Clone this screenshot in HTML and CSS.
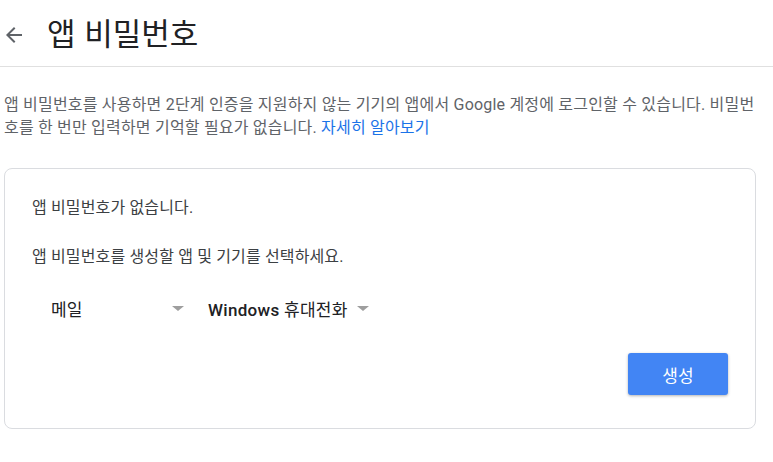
FILE: index.html
```html
<!DOCTYPE html>
<html lang="ko">
<head>
<meta charset="utf-8">
<link rel="stylesheet" href="styles.css">
</head>
<body>
<header class="header">
  <svg class="back" width="24" height="24" viewBox="0 0 24 24"><path d="M20 11H7.83l5.59-5.59L12 4l-8 8 8 8 1.41-1.41L7.83 13H20v-2z" fill="#5f6368"/></svg>
  <h1 class="title">앱 비밀번호</h1>
</header>
<p class="intro">앱 비밀번호를 사용하면 2단계 인증을 지원하지 않는 기기의 앱에서 Google 계정에 로그인할 수 있습니다. 비밀번호를 한 번만 입력하면 기억할 필요가 없습니다. <a class="link" href="#">자세히 알아보기</a></p>
<section class="card">
  <p class="msg first">앱 비밀번호가 없습니다.</p>
  <p class="msg">앱 비밀번호를 생성할 앱 및 기기를 선택하세요.</p>
  <div class="selects">
    <div class="select s1"><span>메일</span><span class="caret"></span></div>
    <div class="select s2"><span><span class="en">Windows</span> 휴대전화</span><span class="caret"></span></div>
  </div>
  <div class="actions"><button class="btn">생성</button></div>
</section>
</body>
</html>
```
FILE: styles.css
```css
* { box-sizing: border-box; }
body {
  margin: 0;
  font-family: Roboto, "Noto Sans CJK KR", sans-serif;
  background: #fff;
  color: #202124;
}
.header {
  display: flex;
  align-items: center;
  height: 67px;
  border-bottom: 1px solid #e0e0e0;
  padding-left: 2px;
}
.back { display: block; margin-right: 21px; margin-top: 3px; }
.title {
  margin: 0;
  font-size: 31px;
  font-weight: 400;
  color: #202124;
  font-family: "Noto Sans CJK KR", sans-serif;
  line-height: 1;
  margin-top: -3px;
}
.intro {
  margin: 26px 4px 0 4px;
  font-size: 16px;
  line-height: 23px;
  letter-spacing: 0.2px;
  color: #5f6368;
}
.link { color: #1a73e8; text-decoration: none; }
.card {
  margin: 29px 18px 0 4px;
  width: 752px;
  height: 261px;
  border: 1px solid #dadce0;
  border-radius: 8px;
  padding: 27px 27px 0 27px;
}
.msg {
  margin: 0;
  font-size: 16px;
  line-height: 24px;
  letter-spacing: 0.15px;
  color: #3c4043;
}
.msg.first { margin-bottom: 25px; }
.selects {
  display: flex;
  gap: 24px;
  margin-top: 19px;
}
.select {
  display: flex;
  align-items: center;
  height: 40px;
  font-size: 17px;
  font-weight: 400;
  color: #202124;
}
.s1 { width: 152px; padding-left: 19px; justify-content: space-between; }
.s2 { gap: 9px; letter-spacing: 0.3px; }
.en { font-weight: 500; }
.caret {
  width: 0; height: 0;
  border-left: 6.5px solid transparent;
  border-right: 6.5px solid transparent;
  border-top: 5px solid #9e9e9e;
}
.actions {
  display: flex;
  justify-content: flex-end;
  margin-top: 25px;
}
.btn {
  width: 100px;
  height: 42px;
  border: 0;
  border-radius: 3px;
  background: #4285f4;
  color: #fff;
  font-family: "Noto Sans CJK KR", sans-serif;
  font-size: 17px;
  box-shadow: 0 1px 3px rgba(0,0,0,0.3);
}
```
